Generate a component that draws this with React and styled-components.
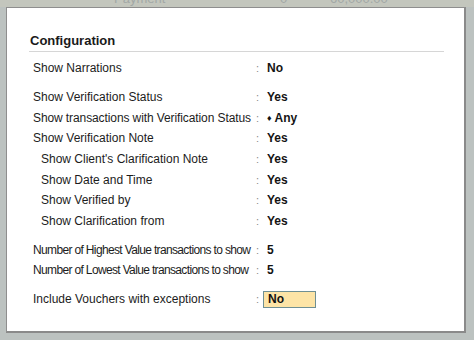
import React from "react";
import styled, { createGlobalStyle } from "styled-components";

const Global = createGlobalStyle`
  html, body { margin: 0; padding: 0; }
  body { background: #b9bfbe; overflow: hidden; }
  #root { width: 474px; height: 340px; }
`;

const Page = styled.div`
  width: 474px;
  height: 340px;
  background: #bcc2c0;
  font-family: "Liberation Sans", Arial, sans-serif;
  color: #1c1c1c;
  overflow: hidden;
`;

const TopBand = styled.div`
  height: 7px;
  background: #c3c6bd;
  position: relative;
  overflow: hidden;
`;

const Ghost = styled.span`
  position: absolute;
  top: -9px;
  left: ${(p) => p.$x}px;
  font-size: 13px;
  color: #a2a8a6;
`;

const Dialog = styled.div`
  margin: 0 6px 0 6px;
  width: 460px;
  height: 326px;
  background: #ffffff;
  border: 1px solid #8e8e8e;
  border-right: 2px solid #8a8a8a;
  border-bottom: 2px solid #8a8a8a;
  padding: 25px 22px 0 22px;
  box-sizing: border-box;
`;

const Title = styled.div`
  font-size: 13px;
  font-weight: bold;
  line-height: 16px;
  padding: 0 0 2px 1px;
  border-bottom: 1px solid #d6d6d6;
  width: 414px;
  color: #1a1a1a;
`;

const List = styled.div`
  display: flex;
  flex-direction: column;
  padding-top: 6px;
`;

const Row = styled.div`
  display: grid;
  grid-template-columns: 223px 11px auto;
  align-items: center;
  height: 20.6px;
  padding-left: 4px;
  margin-top: ${(p) => (p.$gap ? "8.4px" : "0")};
  font-size: 12px;
`;

const Label = styled.span`
  padding-left: ${(p) => (p.$indent ? "8px" : "0")};
  letter-spacing: ${(p) => (p.$tight ? "-0.65px" : p.$semi ? "-0.1px" : "0")};
  white-space: nowrap;
`;

const Colon = styled.span`
  color: #8a8a8a;
  font-size: 11px;
`;

const Value = styled.span`
  font-weight: bold;
  font-size: 12px;
  color: #141414;
`;

const Diamond = styled.span`
  font-size: 9px;
  margin-right: 3px;
  position: relative;
  top: -1px;
`;

const Field = styled.span`
  display: inline-block;
  width: 47px;
  height: 15px;
  line-height: 15px;
  background: #fde4a6;
  border: 1px solid #6f8f93;
  padding-left: 4px;
  margin-left: -4px;
  font-weight: bold;
  font-size: 12px;
  color: #111;
`;

const rows = [
  { label: "Show Narrations", value: "No" },
  { label: "Show Verification Status", value: "Yes", gap: true },
  { label: "Show transactions with Verification Status", value: "Any", diamond: true, semi: true },
  { label: "Show Verification Note", value: "Yes" },
  { label: "Show Client's Clarification Note", value: "Yes", indent: true },
  { label: "Show Date and Time", value: "Yes", indent: true },
  { label: "Show Verified by", value: "Yes", indent: true },
  { label: "Show Clarification from", value: "Yes", indent: true },
  { label: "Number of Highest Value transactions to show", value: "5", gap: true, tight: true },
  { label: "Number of Lowest Value transactions to show", value: "5", tight: true },
  { label: "Include Vouchers with exceptions", value: "No", gap: true, field: true },
];

export default function App() {
  return (
    <Page>
      <Global />
      <TopBand>
        <Ghost $x={114}>Payment</Ghost>
        <Ghost $x={280}>0</Ghost>
        <Ghost $x={330}>60,000.00</Ghost>
      </TopBand>
      <Dialog>
        <Title>Configuration</Title>
        <List>
          {rows.map((r) => (
            <Row key={r.label} $gap={r.gap}>
              <Label $indent={r.indent} $tight={r.tight} $semi={r.semi}>
                {r.label}
              </Label>
              <Colon>:</Colon>
              {r.field ? (
                <span>
                  <Field>{r.value}</Field>
                </span>
              ) : (
                <Value>
                  {r.diamond && <Diamond>♦</Diamond>}
                  {r.value}
                </Value>
              )}
            </Row>
          ))}
        </List>
      </Dialog>
    </Page>
  );
}
